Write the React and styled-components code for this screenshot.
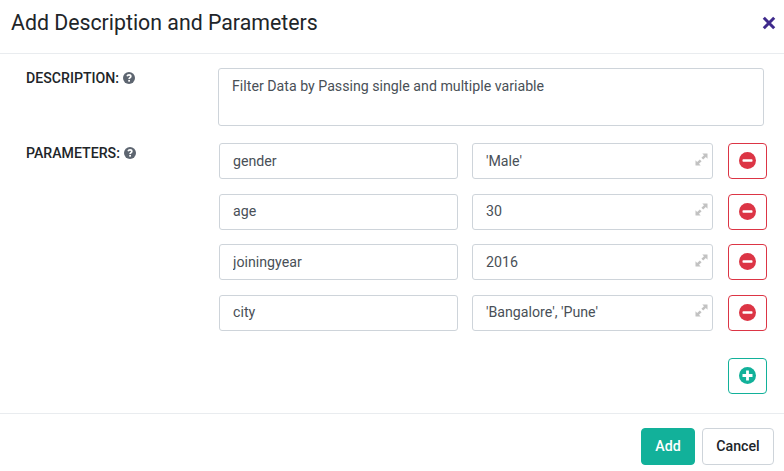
import React from 'react';
import styled, { createGlobalStyle } from 'styled-components';

const GlobalStyle = createGlobalStyle`
  *, *::before, *::after { box-sizing: border-box; }
  body { margin: 0; background: #fff; font-family: Roboto, "Liberation Sans", sans-serif; }
  button, input, textarea { font: inherit; margin: 0; }
`;

const Dialog = styled.section`
  display: flex;
  flex-direction: column;
  width: 784px;
  height: 471px;
  overflow: hidden;
  background: #fff;
  color: #212529;
  font-size: 14.2px;
`;

const Header = styled.header`
  display: flex;
  justify-content: space-between;
  flex: 0 0 54px;
  padding: 9px 8px 0 11px;
  border-bottom: 1px solid #e9ecef;
`;

const Title = styled.h1`
  margin: 0;
  font-size: 21.3px;
  font-weight: 400;
  line-height: 27px;
`;

const CloseButton = styled.button`
  display: flex;
  align-items: center;
  height: 27px;
  padding: 0;
  border: 0;
  background: none;
  color: #3f2a8c;
`;

const Body = styled.main`
  display: flex;
  flex-direction: column;
  gap: 17px;
  flex: 0 0 359px;
  padding: 14px 17px 0 26px;
`;

const Field = styled.div`
  display: grid;
  grid-template-columns: ${(p) => (p.$wide ? '192px 546px' : '193px 548px')};
`;

const Label = styled.label`
  display: flex;
  align-items: flex-start;
  gap: 4px;
  padding-top: 1px;
  font-size: 14.15px;
  font-weight: 500;
  line-height: 18px;
  white-space: nowrap;
  svg { margin-top: 3px; color: #5d6570; }
`;

const Description = styled.textarea`
  display: block;
  height: 58px;
  padding: 7px 13px;
  border: 1px solid #ced4da;
  border-radius: 3px;
  color: #495057;
  line-height: 21px;
  resize: none;
  outline: none;
`;

const Rows = styled.div`
  display: grid;
  row-gap: 14.5px;
`;

const Row = styled.div`
  display: grid;
  grid-template-columns: 239px 241px 39px;
  column-gap: 14px;
  height: 36px;
  & > :last-child { margin-left: 1px; }
`;

const TextBox = styled.div`
  display: flex;
  align-items: center;
  border: 1px solid #ced4da;
  border-radius: 3px;
  padding-right: 4px;
  svg { flex: none; margin-top: -4px; }
`;

const Input = styled.input`
  flex: 1;
  min-width: 0;
  height: 100%;
  padding: 0 0 0.6px 13px;
  border: 0;
  background: none;
  color: #495057;
  outline: none;
`;

const IconButton = styled.button`
  display: flex;
  align-items: center;
  justify-content: center;
  width: 39px;
  height: 36px;
  padding: 0 1px 1px 0;
  border: 1px solid currentColor;
  border-radius: 4px;
  background: #fff;
  color: ${(p) => (p.$tone === 'add' ? '#12b19a' : '#dc3545')};
`;

const AddRow = styled.div`
  display: flex;
  justify-content: flex-end;
  margin-top: 27.5px;
`;

const Footer = styled.footer`
  display: flex;
  justify-content: flex-end;
  gap: 7px;
  flex: 1;
  padding: 14px 10px 0;
  border-top: 1px solid #e9ecef;
`;

const ActionButton = styled.button`
  width: ${(p) => (p.$primary ? 54 : 72)}px;
  height: 37px;
  padding: 0 0 1px;
  border: 1px solid ${(p) => (p.$primary ? '#12b19a' : '#ced4da')};
  border-radius: 4px;
  background: ${(p) => (p.$primary ? '#12b19a' : '#fff')};
  color: ${(p) => (p.$primary ? '#fff' : '#212529')};
  font-size: 14.2px;
  font-weight: 500;
`;

const HelpIcon = () => (
  <svg width="12" height="12" viewBox="0 0 12 12">
    <circle cx="6" cy="6" r="6" fill="currentColor" />
    <path d="M4.1 4.3C4.4 3.3 5.1 2.9 6 2.9C7.1 2.9 7.8 3.5 7.8 4.4C7.8 5.6 6.1 5.6 6.1 7.1" fill="none" stroke="#fff" strokeWidth="1.7" />
    <rect x="5.2" y="7.9" width="1.8" height="1.7" fill="#fff" />
  </svg>
);

const ExpandIcon = () => (
  <svg width="13" height="13" viewBox="0 0 13 13" fill="#c2c2c2">
    <path d="M7.3 0.5H12.5V5.7L10.8 4L8.2 6.6L6.4 4.8L9 2.2Z" />
    <path d="M5.7 12.5H0.5V7.3L2.2 9L4.8 6.4L6.6 8.2L4 10.8Z" />
  </svg>
);

const CloseIcon = () => (
  <svg width="14" height="14" viewBox="0 0 14 14" fill="none" stroke="currentColor" strokeWidth="3">
    <path d="M1.8 1.8L12.2 12.2M12.2 1.8L1.8 12.2" />
  </svg>
);

const CircleIcon = ({ plus }) => (
  <svg width="17" height="17" viewBox="0 0 17 17">
    <circle cx="8.5" cy="8.5" r="8.5" fill="currentColor" />
    {plus ? (
      <path d="M8.5 3.5V13.5M3.5 8.5H13.5" stroke="#fff" strokeWidth="2.8" />
    ) : (
      <rect x="3.5" y="7.2" width="10" height="2.6" rx="0.7" fill="#fff" />
    )}
  </svg>
);

const parameters = [
  ['gender', "'Male'"],
  ['age', '30'],
  ['joiningyear', '2016'],
  ['city', "'Bangalore', 'Pune'"],
];

export default function App() {
  return (
    <>
      <GlobalStyle />
      <Dialog>
        <Header>
          <Title>Add Description and Parameters</Title>
          <CloseButton aria-label="Close"><CloseIcon /></CloseButton>
        </Header>
        <Body>
          <Field $wide>
            <Label>DESCRIPTION: <HelpIcon /></Label>
            <Description defaultValue="Filter Data by Passing single and multiple variable" />
          </Field>
          <Field>
            <Label>PARAMETERS: <HelpIcon /></Label>
            <div>
              <Rows>
                {parameters.map(([name, value]) => (
                  <Row key={name}>
                    <TextBox><Input defaultValue={name} /></TextBox>
                    <TextBox><Input defaultValue={value} /><ExpandIcon /></TextBox>
                    <IconButton $tone="remove" aria-label="Remove parameter"><CircleIcon /></IconButton>
                  </Row>
                ))}
              </Rows>
              <AddRow>
                <IconButton $tone="add" aria-label="Add parameter"><CircleIcon plus /></IconButton>
              </AddRow>
            </div>
          </Field>
        </Body>
        <Footer>
          <ActionButton $primary>Add</ActionButton>
          <ActionButton>Cancel</ActionButton>
        </Footer>
      </Dialog>
    </>
  );
}
